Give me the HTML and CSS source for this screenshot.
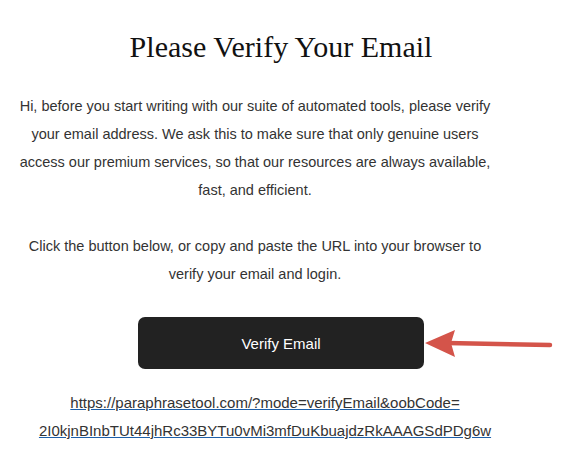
FILE: index.html
```html
<!DOCTYPE html>
<html>
<head>
<meta charset="utf-8">
<link rel="stylesheet" href="styles.css">
</head>
<body>
<div class="page">
  <h1 class="title">Please Verify Your Email</h1>
  <p class="para">Hi, before you start writing with our suite of automated tools, please verify your email address. We ask this to make sure that only genuine users access our premium services, so that our resources are always available, fast, and efficient.</p>
  <p class="para para-second">Click the button below, or copy and paste the URL into your browser to verify your email and login.</p>
  <div class="btn-row">
    <a class="btn" href="#">Verify Email</a>
    <svg class="arrow" width="130" height="34" viewBox="0 0 130 34">
      <line x1="22" y1="16" x2="125" y2="18" stroke="#d4544a" stroke-width="4.5" stroke-linecap="round"/>
      <polygon points="0,16 30,3 26,16 30,30" fill="#d4544a"/>
    </svg>
  </div>
  <p class="link-wrap"><a class="link" href="#">https://paraphrasetool.com/?mode=verifyEmail&amp;oobCode=<br>2I0kjnBInbTUt44jhRc33BYTu0vMi3mfDuKbuajdzRkAAAGSdPDg6w</a></p>
</div>
</body>
</html>
```
FILE: styles.css
```css
html, body {
  margin: 0;
  padding: 0;
  background: #ffffff;
}
.page {
  width: 562px;
  padding-top: 29px;
  display: flex;
  flex-direction: column;
  align-items: center;
}
.title {
  margin: 0;
  font-family: "Liberation Serif", "Times New Roman", serif;
  font-weight: normal;
  font-size: 30px;
  line-height: 36px;
  color: #111;
  text-align: center;
}
.para {
  margin: 27px 52px 0 0;
  width: 486px;
  font-family: "Liberation Sans", Arial, sans-serif;
  font-size: 14.5px;
  line-height: 28px;
  color: #333;
  text-align: center;
}
.para-second {
  margin-top: 28px;
}
.btn-row {
  margin-top: 29px;
  position: relative;
  display: flex;
}
.btn {
  display: flex;
  align-items: center;
  justify-content: center;
  width: 286px;
  height: 52px;
  background: #222222;
  border-radius: 7px;
  color: #ffffff;
  font-family: "Liberation Sans", Arial, sans-serif;
  font-size: 15px;
  text-decoration: none;
}
.arrow {
  position: absolute;
  left: 287px;
  top: 10px;
}
.link-wrap {
  margin: 20px 32px 0 0;
  width: 470px;
  font-family: "Liberation Sans", Arial, sans-serif;
  font-size: 15px;
  line-height: 28px;
  text-align: center;
}
.link {
  color: #333;
  text-decoration: underline;
  text-decoration-color: #1d5fa8;
}
```
